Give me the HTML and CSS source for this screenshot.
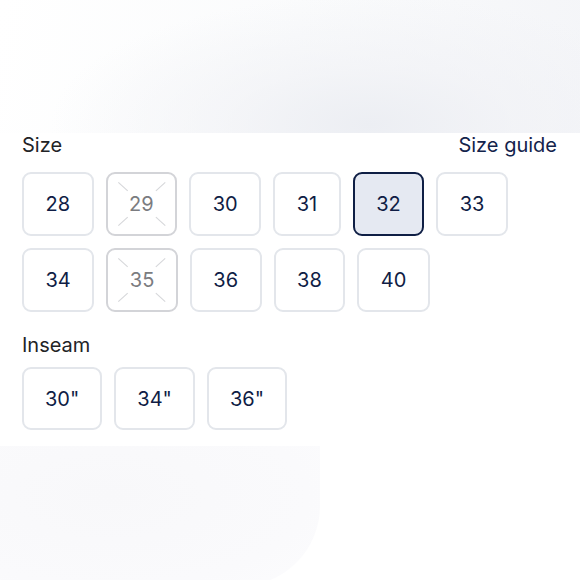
FILE: index.html
```html
<!DOCTYPE html>
<html>
<head>
<meta charset="utf-8">
<link rel="stylesheet" href="styles.css">
</head>
<body>
<div class="hero"></div>
<div class="panel">
  <div class="head">
    <span class="label">Size</span>
    <span class="guide">Size guide</span>
  </div>
  <div class="grid">
    <div class="opt">28</div>
    <div class="opt off">29<svg class="x" viewBox="0 0 72 64" preserveAspectRatio="none"><line x1="11" y1="9" x2="21" y2="18"/><line x1="61" y1="9" x2="51" y2="18"/><line x1="11" y1="55" x2="21" y2="46"/><line x1="61" y1="55" x2="51" y2="46"/></svg></div>
    <div class="opt">30</div>
    <div class="opt">31</div>
    <div class="opt sel">32</div>
    <div class="opt">33</div>
    <div class="opt">34</div>
    <div class="opt off">35<svg class="x" viewBox="0 0 72 64" preserveAspectRatio="none"><line x1="11" y1="9" x2="21" y2="18"/><line x1="61" y1="9" x2="51" y2="18"/><line x1="11" y1="55" x2="21" y2="46"/><line x1="61" y1="55" x2="51" y2="46"/></svg></div>
    <div class="opt">36</div>
    <div class="opt">38</div>
    <div class="opt">40</div>
  </div>
  <div class="head second">
    <span class="label">Inseam</span>
  </div>
  <div class="grid">
    <div class="opt wide">30"</div>
    <div class="opt wide">34"</div>
    <div class="opt wide">36"</div>
  </div>
</div>
<div class="foot"></div>
</body>
</html>
```
FILE: styles.css
```css
html, body {
  margin: 0;
  padding: 0;
  background: #ffffff;
}
body {
  width: 580px;
  height: 580px;
  overflow: hidden;
  font-family: Inter, "Liberation Sans", sans-serif;
}
.hero {
  height: 133px;
  background:
    radial-gradient(ellipse 320px 130px at 370px 125px, #eceef3 0%, rgba(240,241,245,0.6) 45%, rgba(255,255,255,0) 100%),
    linear-gradient(100deg, #ffffff 0%, #fafbfc 50%, #f4f5f8 100%);
}
.panel {
  padding: 0 23px 0 22px;
}
.head {
  display: flex;
  justify-content: space-between;
  align-items: center;
  height: 24px;
  line-height: 24px;
  font-size: 20px;
}
.label {
  color: #222326;
}
.guide {
  color: #13234b;
}
.grid {
  display: flex;
  flex-wrap: wrap;
  gap: 12px;
  margin-top: 15px;
}
.opt {
  position: relative;
  box-sizing: border-box;
  height: 64px;
  padding: 0 21.5px;
  border: 2px solid #e3e6eb;
  border-radius: 9px;
  display: flex;
  align-items: center;
  justify-content: center;
  font-size: 20px;
  font-variant-numeric: proportional-nums;
  font-feature-settings: "pnum" 1, "tnum" 0;
  color: #0f1d45;
  background: #ffffff;
}
.opt.off {
  border-color: #d3d4d8;
  color: #7b7c80;
}
.opt.sel {
  border-color: #0f1f45;
  background: #e5e9f2;
}
.opt.wide {
  height: 63px;
  padding: 0 21px;
}
.x {
  position: absolute;
  inset: 0;
  width: 100%;
  height: 100%;
}
.x line {
  stroke: #d6d7da;
  stroke-width: 1.2;
}
.second {
  margin-top: 21px;
}
.second + .grid {
  margin-top: 10px;
}
.foot {
  margin-top: 16px;
  width: 320px;
  height: 140px;
  background: radial-gradient(ellipse 330px 150px at 110px 50px, #f8f8fa 0%, #fafafc 60%, #fdfdfe 100%);
  border-radius: 0 0 80px 0;
}
```
